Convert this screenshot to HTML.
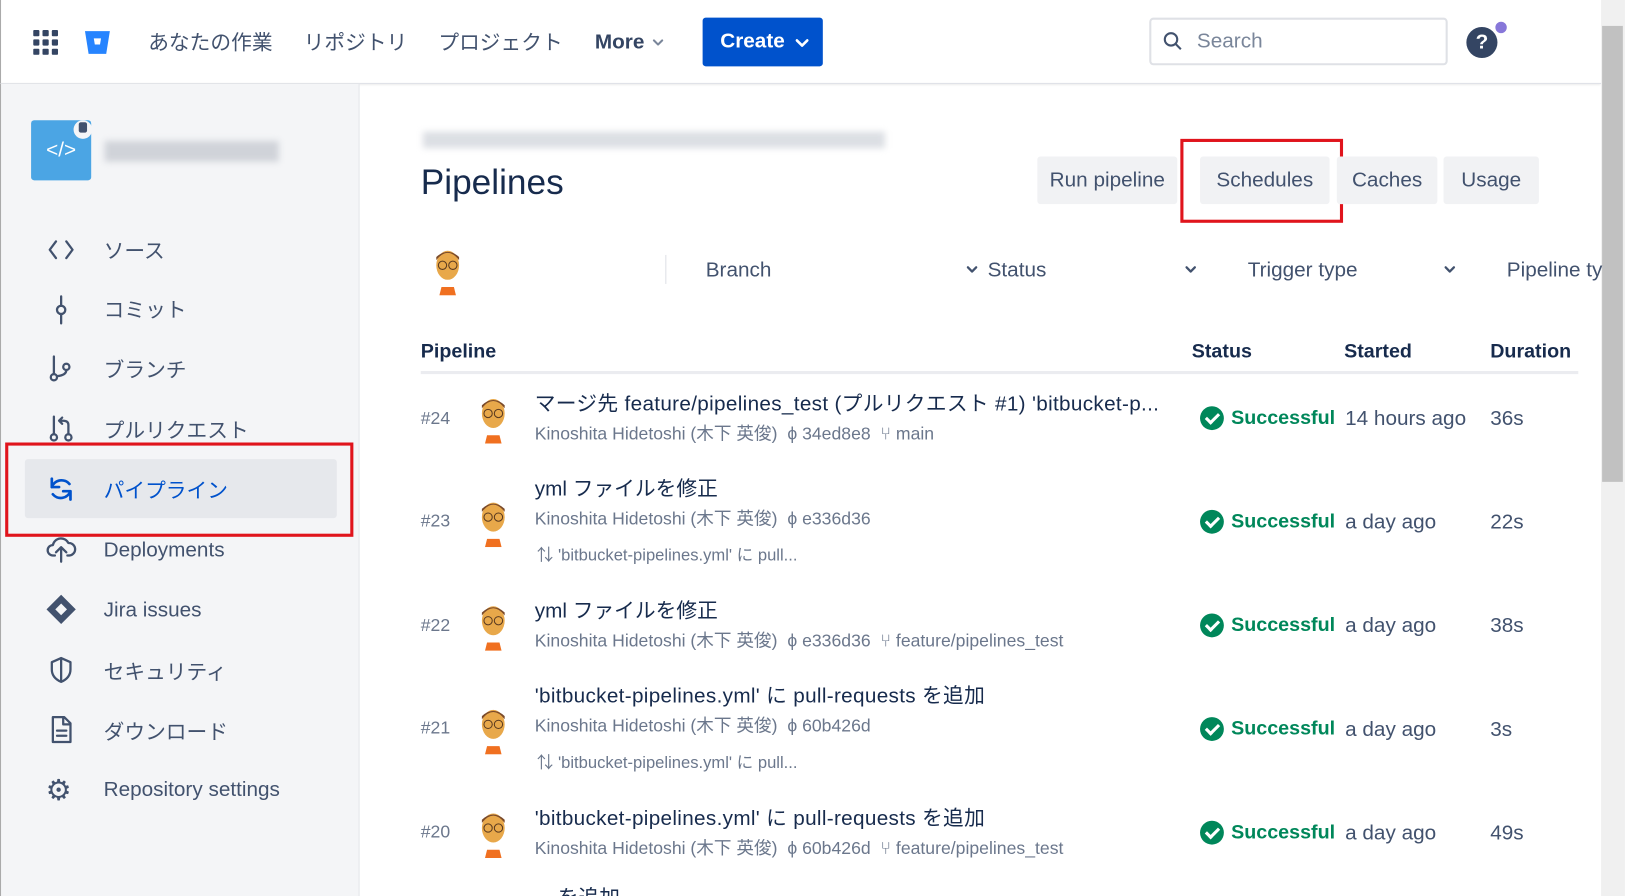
<!DOCTYPE html>
<html><head><meta charset="utf-8"><style>
*{box-sizing:border-box;margin:0;padding:0}
html,body{width:1625px;height:896px;overflow:hidden;background:#fff}
#w{width:1568px;height:865px;transform:scale(1.0363);transform-origin:0 0;position:relative;font-family:"Liberation Sans","Noto Sans CJK JP",sans-serif;color:#172b4d}
.a{position:absolute;white-space:nowrap}
.top{position:absolute;left:0;top:0;width:1545px;height:81px;border-bottom:1px solid #dfe1e6;border-left:1px solid #aaa;box-shadow:0 1px 2px rgba(0,0,0,.08)}
.nav{font-size:20px;color:#42526e;top:25px}
.side{position:absolute;left:0;top:81px;width:347px;height:784px;background:#f4f5f7;border-right:1px solid #e4e6ea;border-left:1px solid #aaa}
.si{font-size:20px;color:#42526e}
.btn{position:absolute;top:151px;height:46px;background:#f1f2f4;border-radius:3px;font-size:20px;color:#42526e;text-align:center;line-height:46px}
.g{color:#6b778c;font-size:17px}
.t{font-size:20px;color:#172b4d}
.ok{color:#00875a;font-weight:bold;font-size:19px}
.ck{position:absolute;width:23px;height:23px;border-radius:50%;background:#00875a}
.ck:after{content:"";position:absolute;left:8px;top:4px;width:5px;height:10px;border:solid #fff;border-width:0 3px 3px 0;transform:rotate(45deg)}
.av{position:absolute;width:28px;height:44px}
svg.ic{position:absolute;fill:none;stroke:#42526e;stroke-width:2.2;stroke-linecap:round;stroke-linejoin:round}
</style></head><body><div id="w">
<div class="top"></div>
<svg class="a" style="left:32px;top:29px" width="24" height="24"><g fill="#344563"><rect x="0" y="0" width="6" height="6" rx="1"/><rect x="9" y="0" width="6" height="6" rx="1"/><rect x="18" y="0" width="6" height="6" rx="1"/><rect x="0" y="9" width="6" height="6" rx="1"/><rect x="9" y="9" width="6" height="6" rx="1"/><rect x="18" y="9" width="6" height="6" rx="1"/><rect x="0" y="18" width="6" height="6" rx="1"/><rect x="9" y="18" width="6" height="6" rx="1"/><rect x="18" y="18" width="6" height="6" rx="1"/></g></svg>
<svg class="a" style="left:81px;top:28px" width="26" height="26"><path d="M1 2h24l-3.5 22h-17z" fill="#2684ff"/><path d="M9.5 9h7l-1 6h-5z" fill="#fff"/></svg>
<div class="a nav" style="left:143px">あなたの作業</div>
<div class="a nav" style="left:293px">リポジトリ</div>
<div class="a nav" style="left:423px">プロジェクト</div>
<div class="a nav" style="left:574px;top:30px;color:#344563;font-weight:bold">More</div>
<svg class="ic" style="left:629px;top:37px;stroke:#7a869a;stroke-width:2" width="12" height="8"><path d="M2 2l4 4 4-4"/></svg>
<div class="a" style="left:678px;top:17px;width:116px;height:47px;background:#0052cc;border-radius:3px;color:#fff;font-weight:bold;font-size:20px;line-height:47px;padding-left:17px">Create</div>
<svg class="ic" style="left:767px;top:37px;stroke:#fff;stroke-width:2.5" width="14" height="9"><path d="M2 2l5 5 5-5"/></svg>
<div class="a" style="left:1109px;top:17px;width:288px;height:46px;border:2px solid #dfe1e6;border-radius:4px"></div>
<svg class="a" style="left:1122px;top:30px" width="20" height="20"><circle cx="8" cy="8" r="6" fill="none" stroke="#42526e" stroke-width="2"/><path d="M12.5 12.5l5 5" stroke="#42526e" stroke-width="2"/></svg>
<div class="a" style="left:1155px;top:29px;font-size:20px;color:#7a869a">Search</div>
<div class="a" style="left:1415px;top:26px;width:30px;height:30px;border-radius:50%;background:#344563;color:#fff;font-weight:bold;font-size:20px;text-align:center;line-height:30px">?</div>
<div class="a" style="left:1443px;top:21px;width:11px;height:11px;border-radius:50%;background:#8777d9"></div>
<div class="a" style="left:1545px;top:0;width:23px;height:865px;background:#f0f0f0"></div>
<div class="a" style="left:1546px;top:25px;width:20px;height:440px;background:#c1c1c1"></div>

<div class="side"></div>
<div class="a" style="left:30px;top:116px;width:58px;height:58px;background:#4ba5e4;border-radius:3px;color:#fff;font-size:20px;text-align:center;line-height:58px">&lt;/&gt;</div>
<div class="a" style="left:71px;top:116px;width:18px;height:18px;border-radius:50%;background:#f4f5f7"></div>
<div class="a" style="left:76px;top:118px;width:8px;height:10px;background:#42526e;border-radius:2px"></div>
<div class="a" style="left:101px;top:136px;width:168px;height:20px;background:#d0d3d9;filter:blur(3px)"></div>

<svg class="ic" style="left:46px;top:230px" width="26" height="22"><path d="M8 3l-6 8 6 8M18 3l6 8-6 8"/></svg>
<div class="a si" style="left:100px;top:226px">ソース</div>
<svg class="ic" style="left:48px;top:284px" width="22" height="30"><circle cx="11" cy="15" r="4"/><path d="M11 2v9M11 19v9"/></svg>
<div class="a si" style="left:100px;top:283px">コミット</div>
<svg class="ic" style="left:46px;top:342px" width="24" height="28"><circle cx="6" cy="22" r="3"/><circle cx="18" cy="12" r="3"/><path d="M6 2v17M18 15q0 5-9 6"/></svg>
<div class="a si" style="left:100px;top:341px">ブランチ</div>
<svg class="ic" style="left:46px;top:400px" width="26" height="28"><circle cx="6" cy="22" r="3"/><circle cx="20" cy="22" r="3"/><path d="M6 2v17M20 19v-9q0-4-5-4h-3M14 3l-3 3 3 3"/></svg>
<div class="a si" style="left:100px;top:399px">プルリクエスト</div>
<div class="a" style="left:24px;top:443px;width:301px;height:57px;background:#e6e8ec;border-radius:3px"></div>
<svg class="ic" style="left:45px;top:458px;stroke:#0052cc;stroke-width:2.6" width="28" height="28"><path d="M22 9a10 10 0 0 0-17 3M6 19a10 10 0 0 0 17-3M5 4v8h7M23 24v-8h-7" /></svg>
<div class="a si" style="left:100px;top:457px;color:#0052cc">パイプライン</div>
<div class="a" style="left:5px;top:427px;width:336px;height:91px;border:3px solid #e0141c"></div>
<svg class="ic" style="left:44px;top:516px" width="30" height="28"><path d="M9 20H7a5 5 0 0 1 0-10 8 8 0 0 1 15-2 6 6 0 0 1 1 12h-2M15 26V13M10 17l5-5 5 5"/></svg>
<div class="a si" style="left:100px;top:520px">Deployments</div>
<div class="a" style="left:49px;top:578px;width:20px;height:20px;background:#42526e;transform:rotate(45deg)"></div>
<div class="a" style="left:55px;top:584px;width:8px;height:8px;background:#f4f5f7;transform:rotate(45deg)"></div>
<div class="a si" style="left:100px;top:578px">Jira issues</div>
<svg class="ic" style="left:47px;top:633px" width="24" height="28"><path d="M12 2l9 4v7q0 8-9 12-9-4-9-12V6z"/><path d="M12 4v20" /></svg>
<div class="a si" style="left:100px;top:632px">セキュリティ</div>
<svg class="ic" style="left:48px;top:690px" width="22" height="28"><path d="M3 2h11l6 6v18H3zM13 2v7h7M7 15h9M7 20h9"/></svg>
<div class="a si" style="left:100px;top:690px">ダウンロード</div>
<div class="a si" style="left:44px;top:746px;font-size:28px">⚙</div>
<div class="a si" style="left:100px;top:751px">Repository settings</div>

<div class="a" style="left:408px;top:127px;width:446px;height:16px;background:#dcdfe4;filter:blur(3px)"></div>
<div class="a" style="left:406px;top:157px;font-size:34px;color:#172b4d">Pipelines</div>
<div class="btn" style="left:1001px;width:135px">Run pipeline</div>
<div class="btn" style="left:1158px;width:125px">Schedules</div>
<div class="a" style="left:1139px;top:134px;width:157px;height:81px;border:3px solid #e0141c"></div>
<div class="btn" style="left:1290px;width:97px">Caches</div>
<div class="btn" style="left:1393px;width:92px">Usage</div>

<svg class="av" style="left:418px;top:241px" viewBox="0 0 28 44"><ellipse cx="14" cy="15" rx="11" ry="14" fill="#e8a84a"/><path d="M3 10q11-14 22 0v-3q-11-10-22 0z" fill="#7a4a2a"/><circle cx="9" cy="15" r="4" fill="none" stroke="#5a3a20"/><circle cx="19" cy="15" r="4" fill="none" stroke="#5a3a20"/><path d="M8 36h12l2 8h-16z" fill="#f07020"/></svg>
<div class="a" style="left:642px;top:246px;width:1px;height:28px;background:#dfe1e6"></div>
<div class="a" style="left:681px;top:250px;font-size:20px;color:#42526e">Branch</div>
<svg class="ic" style="left:932px;top:256px" width="12" height="8"><path d="M2 2l4 4 4-4"/></svg>
<div class="a" style="left:953px;top:250px;font-size:20px;color:#42526e">Status</div>
<svg class="ic" style="left:1143px;top:256px" width="12" height="8"><path d="M2 2l4 4 4-4"/></svg>
<div class="a" style="left:1204px;top:250px;font-size:20px;color:#42526e">Trigger type</div>
<svg class="ic" style="left:1393px;top:256px" width="12" height="8"><path d="M2 2l4 4 4-4"/></svg>
<div class="a" style="left:1454px;top:250px;font-size:20px;color:#42526e">Pipeline ty</div>

<div class="a" style="left:406px;top:329px;font-size:19px;font-weight:bold">Pipeline</div>
<div class="a" style="left:1150px;top:329px;font-size:19px;font-weight:bold">Status</div>
<div class="a" style="left:1297px;top:329px;font-size:19px;font-weight:bold">Started</div>
<div class="a" style="left:1438px;top:329px;font-size:19px;font-weight:bold">Duration</div>
<div class="a" style="left:406px;top:358px;width:1117px;height:3px;background:#ebecf0"></div>

<!-- rows -->
<div class="a g" style="left:406px;top:394px">#24</div>
<svg class="av" style="left:462px;top:384px" viewBox="0 0 28 44"><ellipse cx="14" cy="15" rx="11" ry="14" fill="#e8a84a"/><path d="M3 10q11-14 22 0v-3q-11-10-22 0z" fill="#7a4a2a"/><circle cx="9" cy="15" r="4" fill="none" stroke="#5a3a20"/><circle cx="19" cy="15" r="4" fill="none" stroke="#5a3a20"/><path d="M8 36h12l2 8h-16z" fill="#f07020"/></svg>
<div class="a t" style="left:516px;top:373px;letter-spacing:.3px">マージ先 feature/pipelines_test (プルリクエスト #1) 'bitbucket-p...</div>
<div class="a g" style="left:516px;top:404px">Kinoshita Hidetoshi (木下 英俊) &nbsp;ϕ 34ed8e8 &nbsp;⑂ main</div>
<div class="ck" style="left:1158px;top:392px"></div><div class="a ok" style="left:1188px;top:393px">Successful</div>
<div class="a t" style="left:1298px;top:393px;color:#42526e">14 hours ago</div><div class="a t" style="left:1438px;top:393px;color:#42526e">36s</div>

<div class="a g" style="left:406px;top:493px">#23</div>
<svg class="av" style="left:462px;top:484px" viewBox="0 0 28 44"><ellipse cx="14" cy="15" rx="11" ry="14" fill="#e8a84a"/><path d="M3 10q11-14 22 0v-3q-11-10-22 0z" fill="#7a4a2a"/><circle cx="9" cy="15" r="4" fill="none" stroke="#5a3a20"/><circle cx="19" cy="15" r="4" fill="none" stroke="#5a3a20"/><path d="M8 36h12l2 8h-16z" fill="#f07020"/></svg>
<div class="a t" style="left:516px;top:455px">yml ファイルを修正</div>
<div class="a g" style="left:516px;top:486px">Kinoshita Hidetoshi (木下 英俊) &nbsp;ϕ e336d36</div>
<div class="a g" style="left:518px;top:522px;font-size:16px">⇅ 'bitbucket-pipelines.yml' に pull...</div>
<div class="ck" style="left:1158px;top:492px"></div><div class="a ok" style="left:1188px;top:493px">Successful</div>
<div class="a t" style="left:1298px;top:493px;color:#42526e">a day ago</div><div class="a t" style="left:1438px;top:493px;color:#42526e">22s</div>

<div class="a g" style="left:406px;top:594px">#22</div>
<svg class="av" style="left:462px;top:584px" viewBox="0 0 28 44"><ellipse cx="14" cy="15" rx="11" ry="14" fill="#e8a84a"/><path d="M3 10q11-14 22 0v-3q-11-10-22 0z" fill="#7a4a2a"/><circle cx="9" cy="15" r="4" fill="none" stroke="#5a3a20"/><circle cx="19" cy="15" r="4" fill="none" stroke="#5a3a20"/><path d="M8 36h12l2 8h-16z" fill="#f07020"/></svg>
<div class="a t" style="left:516px;top:573px">yml ファイルを修正</div>
<div class="a g" style="left:516px;top:604px">Kinoshita Hidetoshi (木下 英俊) &nbsp;ϕ e336d36 &nbsp;⑂ feature/pipelines_test</div>
<div class="ck" style="left:1158px;top:592px"></div><div class="a ok" style="left:1188px;top:593px">Successful</div>
<div class="a t" style="left:1298px;top:593px;color:#42526e">a day ago</div><div class="a t" style="left:1438px;top:593px;color:#42526e">38s</div>

<div class="a g" style="left:406px;top:693px">#21</div>
<svg class="av" style="left:462px;top:684px" viewBox="0 0 28 44"><ellipse cx="14" cy="15" rx="11" ry="14" fill="#e8a84a"/><path d="M3 10q11-14 22 0v-3q-11-10-22 0z" fill="#7a4a2a"/><circle cx="9" cy="15" r="4" fill="none" stroke="#5a3a20"/><circle cx="19" cy="15" r="4" fill="none" stroke="#5a3a20"/><path d="M8 36h12l2 8h-16z" fill="#f07020"/></svg>
<div class="a t" style="left:516px;top:655px;letter-spacing:.3px">'bitbucket-pipelines.yml' に pull-requests を追加</div>
<div class="a g" style="left:516px;top:686px">Kinoshita Hidetoshi (木下 英俊) &nbsp;ϕ 60b426d</div>
<div class="a g" style="left:518px;top:722px;font-size:16px">⇅ 'bitbucket-pipelines.yml' に pull...</div>
<div class="ck" style="left:1158px;top:692px"></div><div class="a ok" style="left:1188px;top:693px">Successful</div>
<div class="a t" style="left:1298px;top:693px;color:#42526e">a day ago</div><div class="a t" style="left:1438px;top:693px;color:#42526e">3s</div>

<div class="a g" style="left:406px;top:793px">#20</div>
<svg class="av" style="left:462px;top:784px" viewBox="0 0 28 44"><ellipse cx="14" cy="15" rx="11" ry="14" fill="#e8a84a"/><path d="M3 10q11-14 22 0v-3q-11-10-22 0z" fill="#7a4a2a"/><circle cx="9" cy="15" r="4" fill="none" stroke="#5a3a20"/><circle cx="19" cy="15" r="4" fill="none" stroke="#5a3a20"/><path d="M8 36h12l2 8h-16z" fill="#f07020"/></svg>
<div class="a t" style="left:516px;top:773px;letter-spacing:.3px">'bitbucket-pipelines.yml' に pull-requests を追加</div>
<div class="a g" style="left:516px;top:804px">Kinoshita Hidetoshi (木下 英俊) &nbsp;ϕ 60b426d &nbsp;⑂ feature/pipelines_test</div>
<div class="ck" style="left:1158px;top:792px"></div><div class="a ok" style="left:1188px;top:793px">Successful</div>
<div class="a t" style="left:1298px;top:793px;color:#42526e">a day ago</div><div class="a t" style="left:1438px;top:793px;color:#42526e">49s</div>
<div class="a t" style="left:516px;top:850px">... を追加</div>
</div></body></html>
